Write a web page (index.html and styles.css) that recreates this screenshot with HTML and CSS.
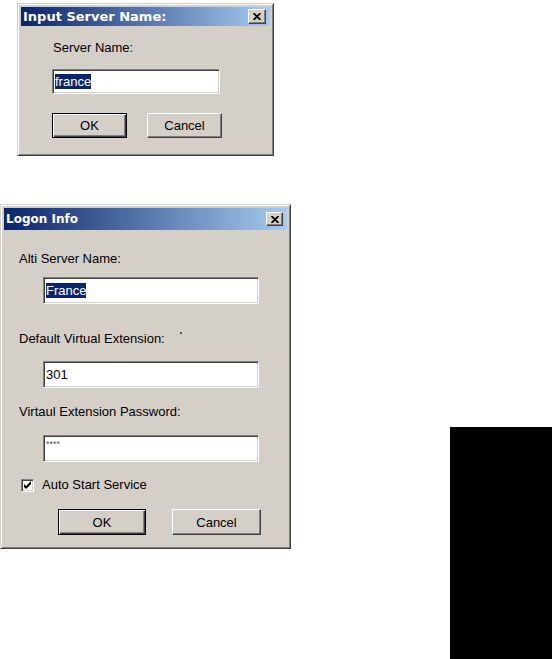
FILE: index.html
```html
<!DOCTYPE html>
<html lang="en">
<head>
    <meta charset="UTF-8">
    <title>Server Dialogs</title>
    <link rel="stylesheet" href="styles.css">
</head>
<body>
    <div class="page">
        <div class="dialogs">
            <div class="window win-server">
                <div class="titlebar">
                    <span class="title">Input Server Name:</span>
                    <span class="close">
                        <svg width="8" height="7" viewBox="0 0 8 7"><path d="M0.5 0 L7.5 7 M7.5 0 L0.5 7" stroke="#000" stroke-width="1.8"/></svg>
                    </span>
                </div>
                <div class="content">
                    <div class="label">Server Name:</div>
                    <div class="field field-server"><span class="sel">france</span></div>
                    <div class="buttons">
                        <div class="btn default">OK</div>
                        <div class="btn">Cancel</div>
                    </div>
                </div>
            </div>

            <div class="window win-logon">
                <div class="titlebar">
                    <span class="title">Logon Info</span>
                    <span class="close">
                        <svg width="8" height="7" viewBox="0 0 8 7"><path d="M0.5 0 L7.5 7 M7.5 0 L0.5 7" stroke="#000" stroke-width="1.8"/></svg>
                    </span>
                </div>
                <div class="content">
                    <div class="label">Alti Server Name:</div>
                    <div class="field"><span class="sel">France</span></div>
                    <div class="label">Default Virtual Extension: <span class="speck"></span></div>
                    <div class="field"><span>301</span></div>
                    <div class="label">Virtaul Extension Password:</div>
                    <div class="field"><span class="stars">****</span></div>
                    <div class="check-row">
                        <span class="checkbox">
                            <svg width="9" height="9" viewBox="0 0 9 9"><path d="M1 3 L3 5 L8 0 L8 3 L3 8 L1 6 Z" fill="#000"/></svg>
                        </span>
                        <span>Auto Start Service</span>
                    </div>
                    <div class="buttons">
                        <div class="btn default">OK</div>
                        <div class="btn">Cancel</div>
                    </div>
                </div>
            </div>
        </div>
        <div class="side">
            <div class="black-block"></div>
        </div>
    </div>
</body>
</html>
```

FILE: styles.css
```css
body {
    margin: 0;
    padding: 0;
    background-color: #fff;
    font-family: "Liberation Sans", Arial, sans-serif;
    font-size: 13px;
    color: #000;
}

.page {
    display: flex;
    width: 552px;
    height: 659px;
    overflow: hidden;
}

.dialogs {
    width: 450px;
}

.side {
    flex: 1;
    padding-top: 427px;
}

.black-block {
    height: 232px;
    background-color: #000;
}

/* classic raised window frame */
.window {
    box-sizing: border-box;
    background-color: #d4d0c8;
    border: 1px solid;
    border-color: #d4d0c8 #404040 #404040 #d4d0c8;
    box-shadow: inset 1px 1px #fff, inset -1px -1px #808080;
    padding: 3px;
}

.win-server {
    width: 257px;
    margin-left: 17px;
    margin-top: 3px;
}

.win-logon {
    width: 291px;
    margin-top: 48px;
}

.titlebar {
    display: flex;
    align-items: center;
    justify-content: space-between;
    background: linear-gradient(to right, #0a246a, #a6caf0);
    color: #fff;
    padding: 0 2px;
}

.win-server .titlebar {
    height: 19px;
    padding-right: 4px;
}

.win-logon .titlebar {
    height: 22px;
    padding-right: 4px;
}

.title {
    font-family: "DejaVu Sans", sans-serif;
    font-weight: bold;
    font-size: 12px;
}

.win-server .title {
    font-size: 13px;
}

.close {
    box-sizing: border-box;
    width: 18px;
    height: 15px;
    background-color: #d4d0c8;
    border: 1px solid;
    border-color: #fff #404040 #404040 #fff;
    box-shadow: inset -1px -1px #808080;
    display: flex;
    align-items: center;
    justify-content: center;
}

.win-logon .close {
    width: 17px;
    height: 14px;
}

.label {
    line-height: 14px;
    white-space: nowrap;
}

.field {
    box-sizing: border-box;
    background-color: #fff;
    border: 1px solid;
    border-color: #808080 #fff #fff #808080;
    box-shadow: inset 1px 1px #404040, inset -1px -1px #d4d0c8;
    padding: 0 2px;
    display: flex;
    align-items: center;
}

.sel {
    background-color: #0a246a;
    color: #fff;
}

.stars {
    font-size: 9px;
    color: #555;
    align-self: flex-start;
    margin-top: 3px;
}

.speck {
    display: inline-block;
    width: 2px;
    height: 2px;
    background-color: #555;
    margin-left: 12px;
    vertical-align: 9px;
}

.buttons {
    display: flex;
}

.btn {
    box-sizing: border-box;
    display: flex;
    align-items: center;
    justify-content: center;
    border: 1px solid;
    border-color: #fff #404040 #404040 #fff;
    box-shadow: inset -1px -1px #808080;
}

.btn.default {
    border-color: #000;
    box-shadow: inset 1px 1px #fff, inset -1px -1px #404040, inset -2px -2px #808080;
}

/* first dialog */
.win-server .content {
    padding: 15px 0 14px 32px;
}

.win-server .field {
    width: 168px;
    height: 25px;
    margin-top: 14px;
    margin-left: -1px;
}

.win-server .buttons {
    margin-top: 19px;
    margin-left: -1px;
    gap: 20px;
}

.win-server .btn {
    width: 75px;
    height: 25px;
}

/* second dialog */
.win-logon .content {
    padding: 22px 0 10px 15px;
}

.win-logon .label {
    margin-left: 0;
}

.win-logon .field + .label {
    margin-top: 28px;
}

.win-logon .field {
    width: 216px;
    height: 27px;
    margin-left: 24px;
    margin-top: 11px;
}

.win-logon .field + .label + .field {
    margin-top: 15px;
}

.win-logon .field + .label + .field + .label {
    margin-top: 17px;
}

.win-logon .field + .label + .field + .label + .field {
    margin-top: 16px;
}

.check-row {
    display: flex;
    align-items: center;
    gap: 8px;
    margin-top: 16px;
    margin-left: 2px;
    line-height: 14px;
}

.checkbox {
    box-sizing: border-box;
    width: 13px;
    height: 13px;
    background-color: #fff;
    border: 1px solid;
    border-color: #808080 #fff #fff #808080;
    box-shadow: inset 1px 1px #404040, inset -1px -1px #d4d0c8;
    display: flex;
    align-items: center;
    justify-content: center;
}

.win-logon .buttons {
    margin-top: 17px;
    margin-left: 39px;
    gap: 26px;
}

.win-logon .btn {
    width: 89px;
    height: 26px;
}

.win-logon .btn.default {
    width: 88px;
}
```
